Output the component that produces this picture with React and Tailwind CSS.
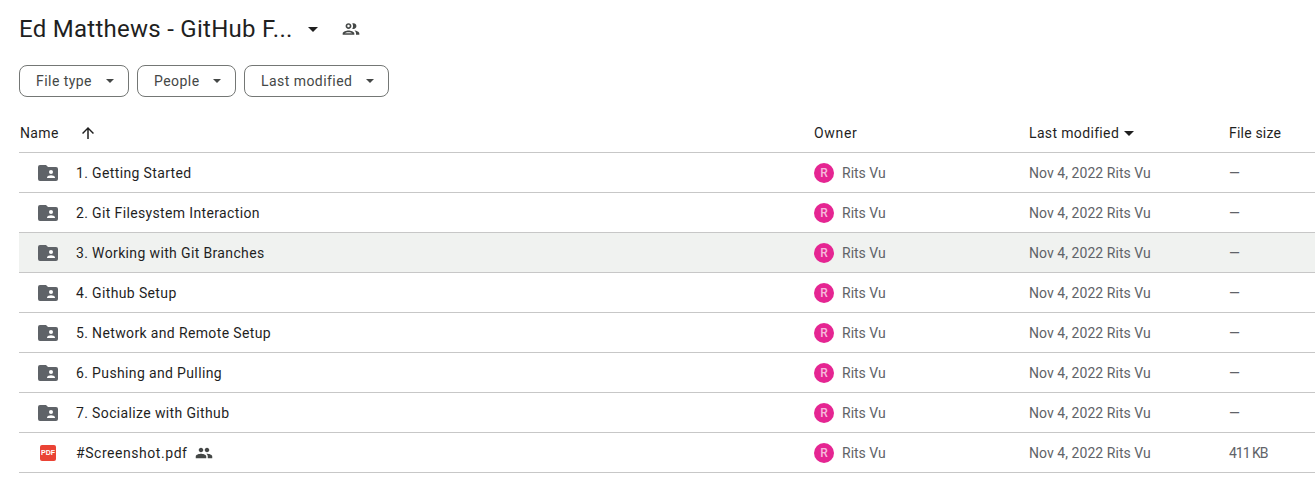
const rows = [
  { name: "1. Getting Started", size: "—" },
  { name: "2. Git Filesystem Interaction", size: "—" },
  { name: "3. Working with Git Branches", size: "—", hover: true },
  { name: "4. Github Setup", size: "—" },
  { name: "5. Network and Remote Setup", size: "—" },
  { name: "6. Pushing and Pulling", size: "—" },
  { name: "7. Socialize with Github", size: "—" },
  { name: "#Screenshot.pdf", size: "411 KB", pdf: true },
];

function Caret({ className }) {
  return (
    <svg viewBox="0 0 10 5" className={className} fill="currentColor">
      <path d="M0 0h10L5 5z" />
    </svg>
  );
}

function SharedFolder() {
  return (
    <svg viewBox="0 0 20 16" className="w-5 h-4 text-[#5f6368]" fill="currentColor">
      <path d="M2 0h6l2 2h8a2 2 0 0 1 2 2v10a2 2 0 0 1-2 2H2a2 2 0 0 1-2-2V2a2 2 0 0 1 2-2z" />
      <circle cx="13" cy="7" r="2" fill="#fff" />
      <path d="M9 12.500c0-1.500 2.600-2.300 4-2.300s4 .8 4 2.300v.5H9z" fill="#fff" />
    </svg>
  );
}

function PdfIcon() {
  return (
    <div className="w-4 h-4 rounded-[2px] bg-[#ea4335] flex items-center justify-center text-white text-[7px] leading-none font-bold font-['Liberation_Sans',sans-serif]">
      PDF
    </div>
  );
}

function PeopleIcon({ className }) {
  return (
    <svg viewBox="0 0 24 24" className={className} fill="currentColor">
      <path d="M16 11c1.660 0 2.990-1.340 2.990-3S17.660 5 16 5s-3 1.340-3 3 1.340 3 3 3zm-8 0c1.660 0 2.990-1.340 2.990-3S9.660 5 8 5 5 6.340 5 8s1.340 3 3 3zm0 2c-2.330 0-7 1.170-7 3.500V19h14v-2.500C15 14.170 10.330 13 8 13zm8 0c-.29 0-.62.020-.97.050 1.160.84 1.970 1.970 1.970 3.450V19h6v-2.500c0-2.330-4.670-3.500-7-3.500z" />
    </svg>
  );
}

function PeopleOutline({ className }) {
  return (
    <svg viewBox="0 0 24 24" className={className} fill="currentColor">
      <path d="M9 13.750c-2.340 0-7 1.170-7 3.500V19h14v-1.750c0-2.330-4.660-3.500-7-3.500zM4.340 17c.84-.58 2.870-1.250 4.660-1.250s3.820.67 4.660 1.250H4.340zM9 12c1.930 0 3.500-1.570 3.500-3.500S10.930 5 9 5 5.500 6.570 5.500 8.500 7.070 12 9 12zm0-5c.83 0 1.500.67 1.500 1.500S9.830 10 9 10s-1.500-.67-1.500-1.500S8.170 7 9 7zm7.040 6.810c1.160.84 1.960 1.960 1.960 3.440V19h4v-1.750c0-2.020-3.500-3.170-5.960-3.440zM15 12c1.930 0 3.500-1.570 3.500-3.500S16.930 5 15 5c-.54 0-1.040.13-1.500.35.630.89 1 1.980 1 3.150s-.37 2.260-1 3.150c.46.220.96.350 1.500.35z" />
    </svg>
  );
}

function Filter({ label, width }) {
  return (
    <div className={`${width} pr-[14px] h-8 shrink-0 rounded-lg border border-[#747775] flex items-center justify-between pl-4 text-[14px] tracking-[0.45px] text-[#444746]`}>
      <span>{label}</span>
      <Caret className="w-2 h-1 text-[#444746]" />
    </div>
  );
}

function Row({ row }) {
  return (
    <div className={`flex items-center h-10 border-b border-[#c7c7c7] text-[14px] ${row.hover ? "bg-[#f0f2f0]" : ""}`}>
      <div className="w-[795px] flex items-center">
        <div className="w-[57px] pl-[19px] flex justify-start">
          {row.pdf ? (
            <div className="ml-[2px]"><PdfIcon /></div>
          ) : (
            <SharedFolder />
          )}
        </div>
        <span className={`text-[#1f1f1f] pt-px ${row.pdf ? "tracking-[0.55px]" : "tracking-[0.36px]"}`}>{row.name}</span>
        {row.pdf && <PeopleIcon className="w-[18px] h-[18px] ml-[7px] text-[#444746]" />}
      </div>
      <div className="w-[215px] flex items-center text-[#5f6368]">
        <div className="w-5 h-5 rounded-full bg-[#e52592] text-white/70 text-[12px] font-medium flex items-center justify-center mr-2">R</div>
        <span className="pt-px">Rits Vu</span>
      </div>
      <div className="w-[200px] text-[#5f6368] tracking-[0.05px] pt-px">Nov 4, 2022 Rits Vu</div>
      <div className={`text-[#5f6368] pt-px ${row.pdf ? "tracking-[-1px]" : ""}`}>{row.size}</div>
    </div>
  );
}

export default function App() {
  return (
    <div className="w-[1315px] h-[502px] bg-white overflow-hidden font-['Roboto',sans-serif]">
      <div className="h-[65px] pl-[19px] flex items-center">
        <h1 className="text-[24px] font-normal text-[#1f1f1f] leading-none tracking-[0.27px] w-[289px] mb-[7px]">Ed Matthews - GitHub F...</h1>
        <Caret className="w-[10px] h-[5px] text-[#1f1f1f] mb-[7px]" />
        <PeopleOutline className="w-5 h-5 ml-[23px] text-[#444746] mb-[7px]" />
      </div>
      <div className="flex gap-2 pl-[19px]">
        <Filter label="File type" width="w-[110px]" />
        <Filter label="People" width="w-[99px]" />
        <Filter label="Last modified" width="w-[145px]" />
      </div>
      <div className="ml-[19px] mt-[16px]">
        <div className="flex items-center h-10 border-b border-[#c7c7c7] text-[14px] text-[#1f1f1f] tracking-[0.35px]">
          <div className="w-[795px] flex items-center">
            <span className="pl-px pt-px">Name</span>
            <svg viewBox="0 0 24 24" className="w-[18px] h-[18px] ml-5" fill="currentColor">
              <path d="M4 12l1.410 1.410L11 7.830V20h2V7.830l5.580 5.590L20 12l-8-8-8 8z" />
            </svg>
          </div>
          <div className="w-[215px] pt-px tracking-[0.7px]">Owner</div>
          <div className="w-[200px] pt-px flex items-center">
            Last modified
            <Caret className="w-[10px] h-[5px] ml-[5px]" />
          </div>
          <div className="pt-px tracking-[0.2px]">File size</div>
        </div>
        {rows.map((row) => (
          <Row key={row.name} row={row} />
        ))}
      </div>
    </div>
  );
}
